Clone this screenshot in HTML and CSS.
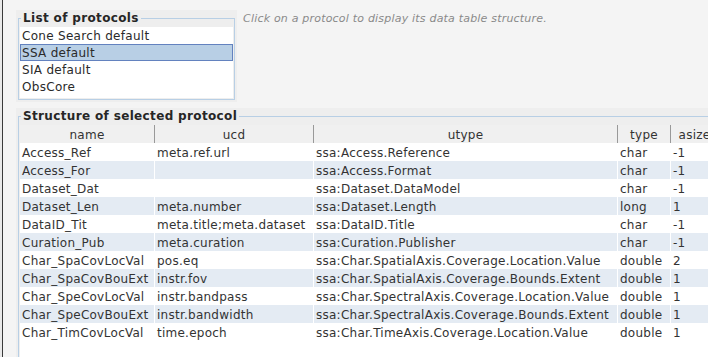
FILE: index.html
```html
<!DOCTYPE html>
<html>
<head>
<meta charset="utf-8">
<link rel="stylesheet" href="styles.css">
</head>
<body>
<div class="app">
  <div class="top">
    <div class="panel protocols-panel">
      <fieldset class="group">
        <legend class="group-title">List of protocols</legend>
        <ul class="plist">
          <li class="pitem">Cone Search default</li>
          <li class="pitem selected">SSA default</li>
          <li class="pitem">SIA default</li>
          <li class="pitem">ObsCore</li>
        </ul>
      </fieldset>
    </div>
    <p class="hint">Click on a protocol to display its data table structure.</p>
  </div>
  <div class="panel structure-panel">
    <fieldset class="group structure-group">
      <legend class="group-title">Structure of selected protocol</legend>
      <div class="viewport">
        <div class="row head">
          <div class="cell">name</div>
          <div class="cell">ucd</div>
          <div class="cell">utype</div>
          <div class="cell">type</div>
          <div class="cell">asize</div>
        </div>
        <div class="row"><div class="cell">Access_Ref</div><div class="cell">meta.ref.url</div><div class="cell">ssa:Access.Reference</div><div class="cell">char</div><div class="cell">-1</div></div>
        <div class="row alt"><div class="cell">Access_For</div><div class="cell"></div><div class="cell">ssa:Access.Format</div><div class="cell">char</div><div class="cell">-1</div></div>
        <div class="row"><div class="cell">Dataset_Dat</div><div class="cell"></div><div class="cell">ssa:Dataset.DataModel</div><div class="cell">char</div><div class="cell">-1</div></div>
        <div class="row alt"><div class="cell">Dataset_Len</div><div class="cell">meta.number</div><div class="cell">ssa:Dataset.Length</div><div class="cell">long</div><div class="cell">1</div></div>
        <div class="row"><div class="cell">DataID_Tit</div><div class="cell">meta.title;meta.dataset</div><div class="cell">ssa:DataID.Title</div><div class="cell">char</div><div class="cell">-1</div></div>
        <div class="row alt"><div class="cell">Curation_Pub</div><div class="cell">meta.curation</div><div class="cell">ssa:Curation.Publisher</div><div class="cell">char</div><div class="cell">-1</div></div>
        <div class="row"><div class="cell">Char_SpaCovLocVal</div><div class="cell">pos.eq</div><div class="cell">ssa:Char.SpatialAxis.Coverage.Location.Value</div><div class="cell">double</div><div class="cell">2</div></div>
        <div class="row alt"><div class="cell">Char_SpaCovBouExt</div><div class="cell">instr.fov</div><div class="cell">ssa:Char.SpatialAxis.Coverage.Bounds.Extent</div><div class="cell">double</div><div class="cell">1</div></div>
        <div class="row"><div class="cell">Char_SpeCovLocVal</div><div class="cell">instr.bandpass</div><div class="cell">ssa:Char.SpectralAxis.Coverage.Location.Value</div><div class="cell">double</div><div class="cell">1</div></div>
        <div class="row alt"><div class="cell">Char_SpeCovBouExt</div><div class="cell">instr.bandwidth</div><div class="cell">ssa:Char.SpectralAxis.Coverage.Bounds.Extent</div><div class="cell">double</div><div class="cell">1</div></div>
        <div class="row"><div class="cell">Char_TimCovLocVal</div><div class="cell">time.epoch</div><div class="cell">ssa:Char.TimeAxis.Coverage.Location.Value</div><div class="cell">double</div><div class="cell">1</div></div>
      </div>
    </fieldset>
  </div>
</div>
</body>
</html>
```

FILE: styles.css
```css
html, body {
  margin: 0;
  padding: 0;
  background: #e9e9e9;
  overflow: hidden;
}
body {
  width: 708px;
  height: 357px;
  font-family: "DejaVu Sans", sans-serif;
  font-size: 12px;
  color: #333;
}
.app {
  margin-left: 2px;
  border-left: 1px solid #3a3a3a;
  height: 357px;
  box-sizing: border-box;
  background: #f4f4f4;
  padding: 10px 0 0 13px;
  display: flex;
  flex-direction: column;
  overflow: hidden;
}
.top {
  display: flex;
  align-items: flex-start;
  height: 98px;
  flex: none;
}
.panel {
  background: #eeeeee;
  box-sizing: border-box;
}
.protocols-panel {
  width: 221px;
  height: 92px;
  padding: 1px 2px 2px 2px;
}
.group {
  margin: 0;
  padding: 2px 1px 1px 1px;
  border: 1px solid #b8cfe5;
  min-width: 0;
  box-sizing: border-box;
}
.protocols-panel .group {
  height: 89px;
}
.group-title {
  font-weight: bold;
  font-size: 12px;
  line-height: 14px;
  letter-spacing: 0.35px;
  color: #262626;
  padding: 0 2px;
  margin-left: 1px;
}
.plist {
  list-style: none;
  margin: 0;
  padding: 0;
  background: #fff;
  height: 71px;
}
.pitem {
  height: 17px;
  line-height: 19px;
  padding-left: 2px;
  box-sizing: border-box;
  color: #2a2a2a;
  letter-spacing: 0.3px;
  overflow: hidden;
}
.pitem.selected {
  background: #b8cfe5;
  border: 1px solid #6382bf;
  line-height: 17px;
  padding-left: 1px;
}
.hint {
  margin: 2px 0 0 6px;
  font-family: "DejaVu Sans", sans-serif;
  font-style: italic;
  font-size: 11px;
  line-height: 14px;
  letter-spacing: 0.2px;
  color: #8a8a8a;
}
.structure-panel {
  flex: 1;
  padding: 1px 0 0 2px;
  width: 700px;
  display: flex;
  min-height: 0;
}
.structure-group {
  flex: 1;
  display: flex;
  flex-direction: column;
  height: 300px;
  border-right: none;
}
.viewport {
  background: #fff;
  height: 260px;
  overflow: hidden;
}
.row {
  display: grid;
  grid-template-columns: 135px 159px 304px 53px 48px;
  height: 18px;
  line-height: 20px;
}
.row.alt {
  background: #e4ebf3;
}
.cell {
  box-sizing: border-box;
  border-right: 1px solid #fff;
  padding-left: 2px;
  white-space: nowrap;
  overflow: hidden;
  letter-spacing: 0.25px;
}
.head {
  background: #f0f0f0;
}
.head .cell {
  border-right: 1px solid #999;
  text-align: center;
  padding-left: 0;
  color: #333;
}
```
